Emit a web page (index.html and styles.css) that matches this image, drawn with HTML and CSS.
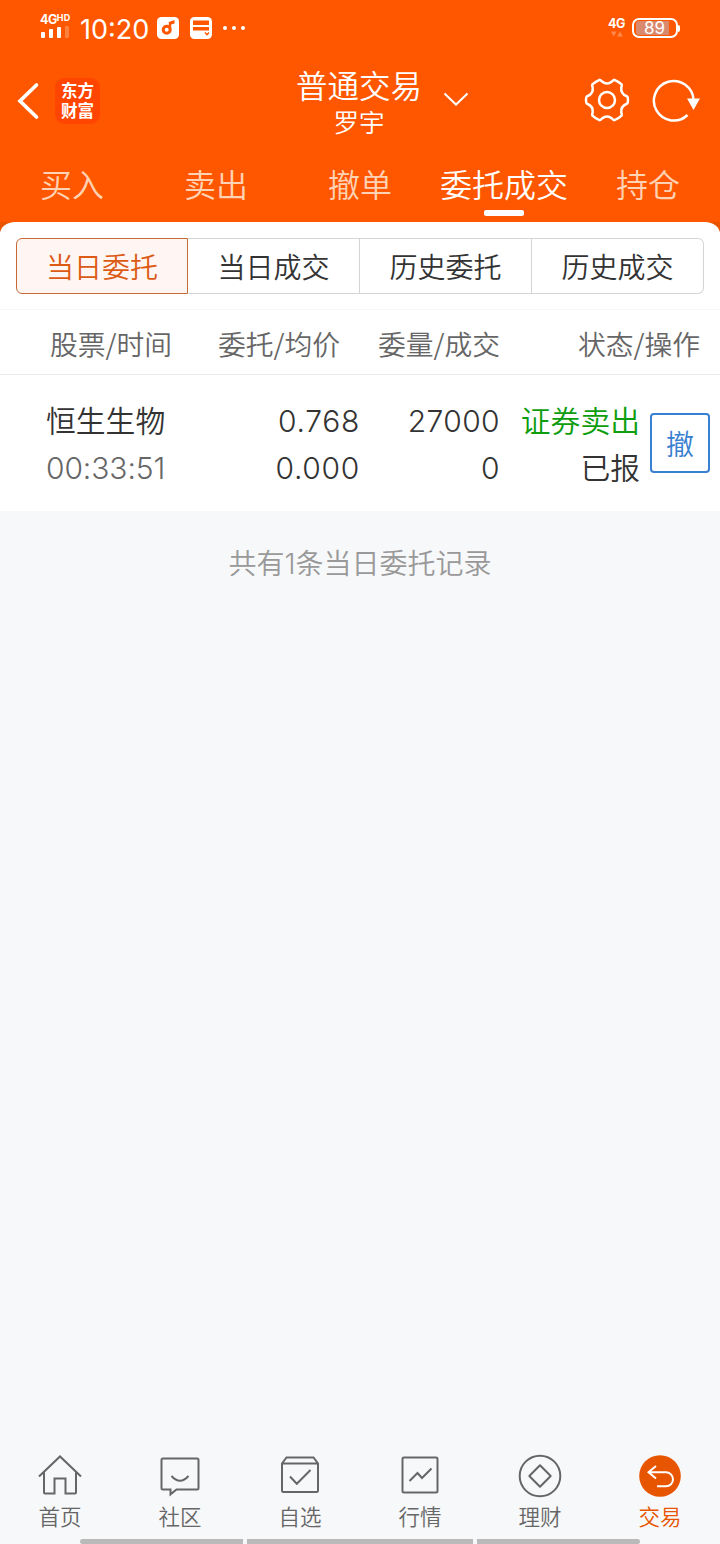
FILE: index.html
```html
<!DOCTYPE html>
<html lang="zh-CN">
<head>
<meta charset="utf-8">
<title>普通交易</title>
<link rel="stylesheet" href="styles.css">
</head>
<body>
<div class="app">
  <header class="header">
    <div class="status">
      <div class="signal">
        <div class="net">4G<span class="hd">HD</span></div>
        <div class="bars"><i class="b1"></i><i class="b2"></i><i class="b3"></i><i class="b4"></i></div>
      </div>
      <div class="clock">10:20</div>
      <svg class="st-icon" width="22" height="22" viewBox="0 0 22 22"><rect width="22" height="22" rx="4.5" fill="#fff"/><circle cx="9.7" cy="12.700" r="3.500" fill="none" stroke="#ff5700" stroke-width="3"/><path d="M11.800 11V5L17.500 3v3.500l-3.300 1V12z" fill="#ff5700"/></svg>
      <svg class="st-icon card-icon" width="22" height="22" viewBox="0 0 22 22"><rect width="22" height="22" rx="4.500" fill="#fff"/><path d="M3 3.500h16v4.500H3zM3 10h16v3.500H3z" fill="#ff5700"/><path d="M15 15.500l2 2.300 2-2.300" fill="none" stroke="#ff5700" stroke-width="1.400"/></svg>
      <svg class="dots" width="24" height="6" viewBox="0 0 24 6" fill="#fff"><circle cx="2" cy="3" r="2"/><circle cx="11" cy="3" r="2"/><circle cx="20" cy="3" r="2"/></svg>
      <div class="net2"><span>4G</span><svg width="12" height="6" viewBox="0 0 12 6" fill="#ff8a4d"><path d="M0 .5h5.500L2.700 5.500zM6.200 5.500h5.500L9 .5z"/></svg></div>
      <div class="battery"><div class="level">89</div></div>
      <i class="tip"></i>
    </div>
    <div class="titlebar">
      <svg class="back" width="24" height="40" viewBox="0 0 24 40"><path d="M20.500 4L4 20l16.500 16" fill="none" stroke="#fff" stroke-width="3.700" stroke-linecap="round"/></svg>
      <div class="logo">东方<br>财富</div>
      <div class="titles"><div class="title">普通交易</div><div class="subtitle">罗宇</div></div>
      <svg class="chev" width="26" height="16" viewBox="0 0 26 16"><path d="M1.500 1.500L13 12.500 24.500 1.500" fill="none" stroke="#fff" stroke-width="2"/></svg>
      <svg class="gear" width="48" height="48" viewBox="0 0 48 48" fill="none" stroke="#fff" stroke-width="2.500" stroke-linejoin="round"><circle cx="24" cy="24" r="8"/><path d="M16.500 3.800Q17.800 4 19 5.600Q24 9.500 29 5.600Q30.200 4 31.500 3.800Q35.500 5.500 38.600 8.400Q39.200 9.600 38.300 11.300Q37.500 17.500 43.400 20Q45 20.300 45 24Q45 27.700 43.400 28Q37.500 30.500 38.300 36.700Q39.200 38.400 38.600 39.600Q35.500 42.500 31.500 44.200Q30.200 44 29 42.400Q24 38.500 19 42.400Q17.800 44 16.500 44.200Q12.500 42.500 9.400 39.600Q8.800 38.400 9.700 36.700Q10.500 30.500 4.600 28Q3 27.700 3 24Q3 20.300 4.600 20Q10.500 17.500 9.700 11.300Q8.800 9.600 9.400 8.400Q12.500 5.500 16.500 3.800Z"/></svg>
      <svg class="refresh" width="48" height="46" viewBox="0 0 48 46"><path d="M35.500 37A19.800 19.800 0 1 1 41.500 22" fill="none" stroke="#fff" stroke-width="2.500"/><path d="M35 20.500h13L41.500 32z" fill="#fff"/></svg>
    </div>
    <nav class="tabs">
      <span>买入</span><span>卖出</span><span>撤单</span><span class="on">委托成交</span><span>持仓</span>
    </nav>
  </header>
  <div class="cornerband"><section class="card">
    <div class="segs">
      <div class="seg on">当日委托</div><div class="seg">当日成交</div><div class="seg">历史委托</div><div class="seg last">历史成交</div>
    </div>
    <div class="thead">
      <span>股票/时间</span><span>委托/均价</span><span>委量/成交</span><span>状态/操作</span>
    </div>
    <div class="order">
      <div class="cell left"><b>恒生生物</b><b class="num time">00:33:51</b></div>
      <div class="cell"><b class="num price">0.768</b><b class="num price">0.000</b></div>
      <div class="cell"><b class="num">27000</b><b class="num">0</b></div>
      <div class="cell"><b class="sell">证券卖出</b><b>已报</b></div>
      <div class="cancel">撤</div>
    </div>
  </section></div>
  <div class="summary">共有<span class="one">1</span>条当日委托记录</div>
  <nav class="bottom">
    <div class="item"><svg width="44" height="44" viewBox="0 0 44 44"><path d="M1 22.500L22 2.500l21 20M6 18.500V38.500q0 1 1 1h9.500V24.500h11v15H37q1 0 1-1V18.500"/></svg><span>首页</span></div>
    <div class="item"><svg width="44" height="44" viewBox="0 0 44 44"><path d="M5 4.500h34q1.500 0 1.500 1.500v28q0 1.500-1.500 1.500H18.500l-6 4.800v-4.800H5q-1.500 0-1.500-1.500V6q0-1.500 1.500-1.500zM13.500 22Q22 31.500 30.500 22"/></svg><span>社区</span></div>
    <div class="item"><svg width="44" height="44" viewBox="0 0 44 44"><path d="M4 9.500L8.500 3.500h27l4.500 6V36.500q0 1.500-1.500 1.500H5.500Q4 38 4 36.500zH40M12 22.500l6.800 7.200L32.500 16"/></svg><span>自选</span></div>
    <div class="item"><svg width="44" height="44" viewBox="0 0 44 44"><rect x="4.500" y="3.500" width="35" height="35" rx="1.500"/><path d="M11.500 27l8-8 4.500 5 9.500-9.500"/></svg><span>行情</span></div>
    <div class="item"><svg width="44" height="44" viewBox="0 0 44 44"><circle cx="22" cy="22" r="20.300"/><path d="M22 11.300L32.700 22 22 32.700 11.300 22z" stroke-linejoin="round"/></svg><span>理财</span></div>
    <div class="item on"><svg width="44" height="44" viewBox="0 0 44 44"><circle class="disc" cx="22" cy="22" r="20.800"/><path class="arrow" d="M18 12l-7.500 6.300L18 24.500M10.500 18.300H28a7 7 0 0 1 0 14H19"/></svg><span>交易</span></div>
  </nav>
  <div class="gesture"><i class="g1"></i><i class="g2"></i><i class="g3"></i></div>
</div>
</body>
</html>
```
FILE: styles.css
```css
* { box-sizing: border-box; }
body {
  margin: 0;
  font-family: "Noto Sans CJK SC", sans-serif;
  font-weight: 350;
  color: #333;
  background: #f7f8fa;
}
i, b { font-style: normal; font-weight: inherit; display: block; }
svg { display: block; flex: none; }
.app { width: 720px; height: 1544px; display: flex; flex-direction: column; }
.header { height: 222px; background: #ff5700; color: #fff; }

.status { height: 56px; display: flex; align-items: flex-start; padding-left: 40px; font-family: Inter, sans-serif; }
.signal { width: 40px; padding-top: 14px; }
.net { font: 700 12.500px/12px Inter, sans-serif; display: flex; letter-spacing: -.5px; }
.hd { font-size: 9px; line-height: 8px; letter-spacing: .3px; }
.bars { display: flex; align-items: flex-end; gap: 4px; height: 12px; padding-left: 1px; }
.bars i { width: 4px; background: #fff; border-radius: 1px; }
.bars .b1 { height: 6px; }
.bars .b2 { height: 9px; }
.bars .b3 { height: 11px; }
.bars .b4 { height: 12px; opacity: .25; }
.clock { width: 77px; padding-top: 13px; font-size: 27px; line-height: 33px; font-weight: 400; }
.st-icon { margin-top: 17px; }
.card-icon { margin-left: 11px; }
.dots { margin: 25px 0 0 11px; }
.net2 { margin: 17px 0 0 361px; width: 24px; font: 700 12.500px/14px Inter, sans-serif; letter-spacing: -.4px; }
.net2 svg { margin-left: 3px; }
.battery { width: 46px; height: 20px; margin-top: 18px; border: 2px solid #fff; border-radius: 7px; padding: 1px 7px 1px 2px; }
.level { height: 14px; background: #d98a6e; border-radius: 3px 0 0 3px; font-size: 17px; line-height: 14px; padding-left: 8px; font-weight: 400; }
.tip { width: 2px; height: 7px; margin-top: 25px; background: #fff; border-radius: 0 2px 2px 0; }

.titlebar { height: 94px; display: flex; align-items: flex-start; }
.back { margin: 25px 0 0 16px; }
.logo { width: 45px; height: 46px; margin: 22px 0 0 15px; padding-top: 3px; border-radius: 9px; background: #ff4500; font-size: 16.500px; line-height: 19.500px; font-weight: 700; text-align: center; }
.titles { width: 130px; margin-left: 194px; text-align: center; }
.title { font-size: 31.500px; line-height: 40px; padding-top: 8px; white-space: nowrap; }
.subtitle { font-size: 25.500px; line-height: 34px; }
.chev { margin: 36px 0 0 19px; }
.gear { margin: 20px 0 0 114px; }
.refresh { margin: 22px 0 0 21px; }

.tabs { height: 72px; display: grid; grid-template-columns: repeat(5, 144px); font-size: 32px; line-height: 67px; text-align: center; color: #ffd2b4; }
.tabs .on { color: #fff; }
.tabs span { height: 66px; }
.tabs .on::after { content: ""; display: block; width: 40px; height: 6px; margin: -7px auto 0; background: #fff; border-radius: 2px; }

.cornerband { background: linear-gradient(#e85300 10px, #fff 10px); }
.card { background: #fff; border-radius: 15px 15px 0 0 / 12px 12px 0 0; height: 289px; padding-top: 16px; }
.segs { display: flex; margin: 0 16px 15px; }
.seg { width: 172px; height: 56px; border: 1px solid #d3d5d7; border-left-width: 0; text-align: center; font-size: 28px; line-height: 55px; }
.seg.on { border: 1px solid #c46a35; border-radius: 6px 0 0 6px; background: #fff6f3; color: #dc5a14; }
.seg.last { border-radius: 0 6px 6px 0; }
.thead { height: 66px; border: 1px solid #ebebec; border-top-color: #f7f7f8; border-width: 1px 0; padding: 0 20px 0 50px; display: grid; grid-template-columns: 121px 169px 160px 200px; font-size: 27.800px; line-height: 66px; color: #666; text-align: right; white-space: nowrap; }
.order { display: grid; grid-template-columns: 120px 194px 140px 140px 60px; padding: 21px 10px 0 46px; font-size: 29.800px; line-height: 47px; white-space: nowrap; }
.cell { text-align: right; }
.left { text-align: left; }
.num { font-family: Inter, sans-serif; font-size: 30px; height: 47px; padding-top: 2px; letter-spacing: .4px; }
.price { letter-spacing: .7px; }
.time { color: #666; letter-spacing: -.1px; }
.sell { color: #0d9d0d; }
.cancel { width: 60px; height: 60px; margin: 17px 0 0 10px; border: 2px solid #3880d0; border-radius: 4px; color: #3880d0; font-size: 28px; line-height: 57px; text-align: center; }

.summary { padding-top: 31px; text-align: center; font-size: 28px; line-height: 40px; color: #999; }
.one { font-family: Inter, sans-serif; line-height: 1; }
.bottom { margin-top: auto; height: 85px; display: grid; grid-template-columns: repeat(6, 120px); }
.item { display: flex; flex-direction: column; align-items: center; font-size: 21.500px; line-height: 30px; color: #666; }
.item svg { fill: none; stroke: #666; stroke-width: 2; margin-bottom: 3px; }
.item.on { color: #e85500; }
.item .disc { fill: #e85500; stroke: none; }
.item .arrow { stroke: #fff; }
.gesture { height: 5px; display: flex; gap: 4px; padding-left: 80px; }
.gesture i { height: 5px; background: #b9b9b9; }
.g1, .g3 { width: 163px; }
.g2 { width: 226px; }
.g1 { border-radius: 3px 0 0 3px; }
.g3 { border-radius: 0 3px 3px 0; }
```
